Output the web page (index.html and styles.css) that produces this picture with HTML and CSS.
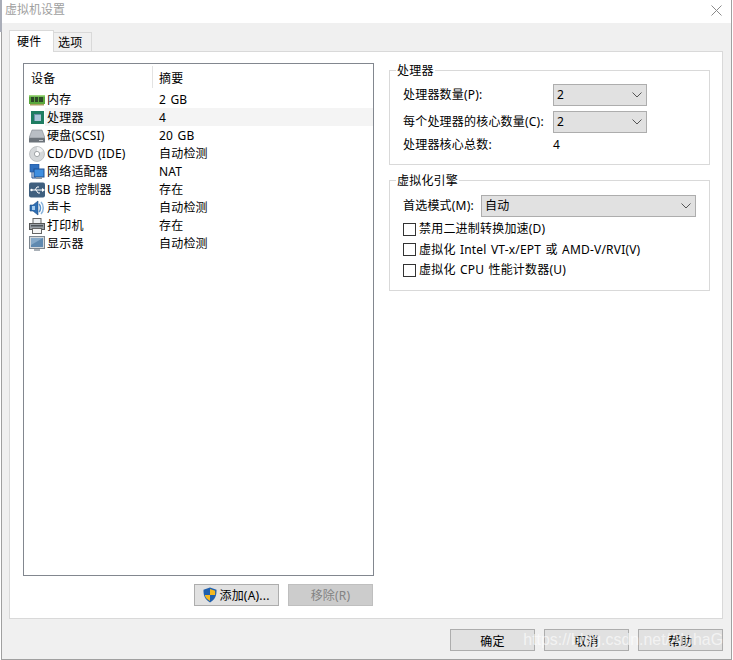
FILE: index.html
```html
<!DOCTYPE html>
<html lang="zh-CN">
<head>
<meta charset="utf-8">
<title>虚拟机设置</title>
<link rel="stylesheet" href="styles.css">
</head>
<body>
<div class="window">
  <header class="titlebar">
    <span class="title">虚拟机设置</span>
    <svg class="close" width="11" height="11" viewBox="0 0 11 11"><path d="M.5.5l10 10M10.500.5l-10 10" stroke="#8a8a8a" fill="none"/></svg>
  </header>
  <div class="body">
    <div class="tabs">
      <div class="tab active">硬件</div>
      <div class="tab">选项</div>
    </div>
    <div class="panel">
      <div class="left">
        <div class="list">
          <div class="list-head"><span class="col-a">设备</span><span class="col-b">摘要</span></div>
          <div class="row">
            <svg class="ico" viewBox="0 0 16 16"><rect x="0" y="3" width="16" height="9" fill="#5aa83c"/><rect x="0" y="3" width="16" height="1.500" fill="#9ed67e"/><rect x="2" y="5" width="3" height="5" fill="#2d4a28"/><rect x="6" y="5" width="3" height="5" fill="#2d4a28"/><rect x="10" y="5" width="4" height="5" fill="#2d4a28"/><rect x="1" y="12" width="14" height="1.500" fill="#a8a060"/></svg>
            <span class="name">内存</span><span class="sum">2 GB</span>
          </div>
          <div class="row selected">
            <svg class="ico" viewBox="0 0 16 16"><rect x="2" y="1" width="13" height="13" fill="#1f7d62"/><rect x="5" y="4" width="7" height="7" fill="#a9c5d8"/><path d="M5 4h7v1H6v6H5z" fill="#6e8ea8"/></svg>
            <span class="name">处理器</span><span class="sum">4</span>
          </div>
          <div class="row">
            <svg class="ico" viewBox="0 0 16 16"><path d="M3 2h10l3 8H0z" fill="#b9bec4" stroke="#7e858c" stroke-width=".6"/><rect x="0" y="10" width="16" height="4.500" rx=".5" fill="#6d747b"/><rect x="10" y="12" width="4" height="1" fill="#c8ccd0"/></svg>
            <span class="name">硬盘(SCSI)</span><span class="sum">20 GB</span>
          </div>
          <div class="row">
            <svg class="ico" viewBox="0 0 16 16"><circle cx="8" cy="8" r="7.500" fill="#d5d8da" stroke="#a2a6aa" stroke-width=".6"/><path d="M8 1a7 7 0 0 1 6 4L8 8z" fill="#f2f3f4"/><circle cx="8" cy="8" r="2.600" fill="#fff" stroke="#8d9296" stroke-width=".8"/></svg>
            <span class="name">CD/DVD (IDE)</span><span class="sum">自动检测</span>
          </div>
          <div class="row">
            <svg class="ico" viewBox="0 0 16 16"><rect x="1" y="0" width="9" height="8" fill="#2f70c0" stroke="#1f4f90" stroke-width=".6"/><path d="M3 8v6h3M6 14h4" stroke="#1f4f90" fill="none"/><rect x="5" y="5" width="10" height="8" fill="#3f8fe0" stroke="#1f4f90"/><rect x="7" y="13" width="6" height="2" fill="#8a96a4"/></svg>
            <span class="name">网络适配器</span><span class="sum">NAT</span>
          </div>
          <div class="row">
            <svg class="ico" viewBox="0 0 16 16"><rect x="0" y="0.500" width="16" height="15" rx="2" fill="#3f5f7e"/><path d="M2 8h11M6 8l2-3h2M7 8l2 3h2" stroke="#fff" stroke-width="1" fill="none"/><path d="M13 6l3 2-3 2z" fill="#fff"/><circle cx="2.500" cy="8" r="1.200" fill="#fff"/></svg>
            <span class="name">USB 控制器</span><span class="sum">存在</span>
          </div>
          <div class="row">
            <svg class="ico" viewBox="0 0 16 16"><path d="M1 5h3l5-4v14l-5-4H1z" fill="#2f6fb4" stroke="#1d4a82" stroke-width=".6"/><path d="M10 4c2 2 2 6 0 8" stroke="#5a93cc" stroke-width="1.500" fill="none"/><path d="M12 2c3 3 3 9 0 12" stroke="#8bb4dc" stroke-width="1.500" fill="none"/><rect x="3" y="6" width="3" height="4" fill="#a7cdee"/></svg>
            <span class="name">声卡</span><span class="sum">自动检测</span>
          </div>
          <div class="row">
            <svg class="ico" viewBox="0 0 16 16"><rect x="4" y="0.500" width="8" height="5" fill="#eef0f2" stroke="#666"/><rect x="0.500" y="5.500" width="15" height="6" fill="#9aa0a6" stroke="#555"/><rect x="3.500" y="10.500" width="9" height="5" fill="#f5f5f5" stroke="#666"/><rect x="2" y="7" width="12" height="1.500" fill="#4d5358"/></svg>
            <span class="name">打印机</span><span class="sum">存在</span>
          </div>
          <div class="row">
            <svg class="ico" viewBox="0 0 16 16"><rect x="0.500" y="0.500" width="15" height="12" fill="#d2d7dc" stroke="#7e8790"/><rect x="2" y="2" width="12" height="9" fill="#5f89b0"/><path d="M2 2h12L2 9z" fill="#86a9c9"/><rect x="5" y="13" width="6" height="2" fill="#aab1b8"/></svg>
            <span class="name">显示器</span><span class="sum">自动检测</span>
          </div>
        </div>
        <div class="list-actions">
          <button class="btn" type="button"><svg class="shield" width="14" height="16" viewBox="0 0 15 16"><path d="M7.500 0L14.500 2.500C14.500 9 13 13 7.500 16 2 13 .5 9 .5 2.500z" fill="#1f5fae"/><path d="M7.500 1.500L13 3.500V8H7.500zM7.500 8V14.400C4 12.300 2.300 10.500 2 8z" fill="#f4b820"/></svg>添加(A)...</button>
          <button class="btn disabled" type="button">移除(R)</button>
        </div>
      </div>
      <div class="right">
        <fieldset class="group group-cpu">
          <legend>处理器</legend>
          <div class="field f1"><label>处理器数量(P):</label><div class="select sel-s"><span>2</span><svg class="chev" width="10" height="6" viewBox="0 0 10 6"><path d="M.5.500l4.500 4.500 4.500-4.500" stroke="#555" fill="none"/></svg></div></div>
          <div class="field"><label>每个处理器的核心数量(C):</label><div class="select sel-s"><span>2</span><svg class="chev" width="10" height="6" viewBox="0 0 10 6"><path d="M.5.500l4.500 4.500 4.500-4.500" stroke="#555" fill="none"/></svg></div></div>
          <div class="field f3"><label>处理器核心总数:</label><span>4</span></div>
        </fieldset>
        <fieldset class="group group-virt">
          <legend>虚拟化引擎</legend>
          <div class="mode"><label>首选模式(M):</label><div class="select sel-l"><span>自动</span><svg class="chev" width="10" height="6" viewBox="0 0 10 6"><path d="M.5.500l4.500 4.500 4.500-4.500" stroke="#555" fill="none"/></svg></div></div>
          <div class="check"><i class="box"></i>禁用二进制转换加速(D)</div>
          <div class="check"><i class="box"></i>虚拟化 Intel VT-x/EPT 或 AMD-V/RVI(V)</div>
          <div class="check"><i class="box"></i>虚拟化 CPU 性能计数器(U)</div>
        </fieldset>
      </div>
    </div>
    <footer class="footer">
      <button class="btn" type="button">确定</button>
      <button class="btn" type="button">取消</button>
      <button class="btn" type="button">帮助</button>
      <span class="watermark">https://blog.csdn.net/AlphaG</span>
    </footer>
  </div>
</div>
</body>
</html>
```
FILE: styles.css
```css
* { box-sizing: border-box; }
html, body { margin: 0; padding: 0; }
body {
  width: 733px;
  height: 660px;
  overflow: hidden;
  background: #fff;
  font: 12px/16px "Noto Sans", "Noto Sans CJK SC", sans-serif;
  letter-spacing: .2px;
  word-spacing: 1px;
  color: #000;
  padding: 0 1px;
  position: relative;
}
body::before {
  content: "";
  position: absolute;
  left: 0;
  top: 0;
  width: 2px;
  height: 32px;
  background: #a9adb8;
}
.window {
  width: 731px;
  height: 660px;
  background: #f0f0f0;
  border: 1px solid #a0a0a0;
  border-width: 0 1px 1px;
  display: flex;
  flex-direction: column;
}
.titlebar {
  height: 23px;
  flex: none;
  background: #fff;
  display: flex;
  align-items: center;
  justify-content: space-between;
  padding: 0 9px 0 3px;
}
.title { color: #a0a0a0; margin-top: -3px; letter-spacing: 0; }
.close { margin-top: -3px; }
.body { flex: 1; padding: 8px 8px 0 7px; display: flex; flex-direction: column; }
.tabs { display: flex; align-items: flex-end; height: 20px; position: relative; z-index: 1; }
.tab {
  height: 19px;
  width: 38px;
  background: #f0f0f0;
  border: 1px solid #d9d9d9;
  border-bottom: 0;
  border-left: 0;
  padding-left: 4px;
  line-height: 19px;
}
.tab.active {
  height: 22px;
  width: 45px;
  margin-bottom: -1px;
  background: #fff;
  border-left: 1px solid #d9d9d9;
  padding-left: 7px;
  line-height: 21px;
}
.panel {
  height: 568px;
  background: #fff;
  border: 1px solid #d9d9d9;
  padding: 11px 0 12px 13px;
  display: flex;
  gap: 15px;
}
.left { width: 351px; flex: none; display: flex; flex-direction: column; }
.list { height: 513px; border: 1px solid #82878f; }
.list-head { height: 26px; display: flex; align-items: center; }
.col-a { width: 129px; padding-left: 7px; border-right: 1px solid #e3e3e3; height: 22px; line-height: 26px; }
.col-b { padding-left: 6px; height: 22px; line-height: 26px; }
.row { height: 18px; display: flex; align-items: center; padding: 1px 0 0 5px; }
.row.selected { background: linear-gradient(to right, #fff 21px, #f4f4f4 21px); }
.ico { width: 16px; height: 16px; flex: none; }
.name { margin-left: 2px; width: 112px; flex: none; white-space: nowrap; }
.sum { white-space: nowrap; }
.list-actions { display: flex; justify-content: flex-end; gap: 9px; margin-top: 8px; padding-right: 1px; }
.btn {
  width: 85px;
  height: 22px;
  padding: 2px 0 0;
  background: #e1e1e1;
  border: 1px solid #adadad;
  font: inherit;
  letter-spacing: inherit;
  color: inherit;
  display: inline-flex;
  align-items: center;
  justify-content: center;
}
.btn.disabled { background: #cccccc; border-color: #bfbfbf; color: #838383; }
.shield { margin: -2px 2px 0 0; flex: none; }
.right { width: 321px; flex: none; margin-top: -1px; display: flex; flex-direction: column; gap: 7px; }
.group { margin: 0; border: 1px solid #d9d9d9; padding: 0 0 0 13px; min-width: 0; }
.group legend { padding: 2px 1px 0; margin-left: -7px; line-height: 14px; }
.group-cpu { height: 103px; }
.group-virt { height: 119px; }
.field { display: flex; align-items: center; height: 22px; margin-bottom: 5px; }
.field label { width: 150px; flex: none; white-space: nowrap; }
.f1 { margin-top: 6px; }
.f3 { height: 16px; margin-top: -1px; margin-bottom: 0; }
.select {
  height: 22px;
  background: #e1e1e1;
  border: 1px solid #adadad;
  display: flex;
  align-items: center;
  justify-content: space-between;
  padding: 0 3px;
}
.sel-s { width: 94px; }
.sel-l { width: 215px; }
.chev { margin-right: 1px; }
.mode { display: flex; align-items: center; height: 22px; margin-top: 7px; margin-bottom: 2px; }
.mode label { width: 78px; flex: none; white-space: nowrap; }
.check { display: flex; align-items: center; height: 20.5px; white-space: pre; }
.box { width: 13px; height: 13px; border: 1px solid #333; background: #fff; margin-right: 3px; flex: none; }
.footer { flex: none; display: flex; justify-content: flex-end; gap: 9px; padding-top: 10px; position: relative; }
.footer .btn { padding-top: 3px; }
.watermark {
  position: absolute;
  right: 0;
  top: 10px;
  font: 15.9px/22px "Liberation Sans", sans-serif;
  letter-spacing: 0;
  word-spacing: 0;
  color: rgba(255,255,255,.62);
  white-space: nowrap;
}
```
